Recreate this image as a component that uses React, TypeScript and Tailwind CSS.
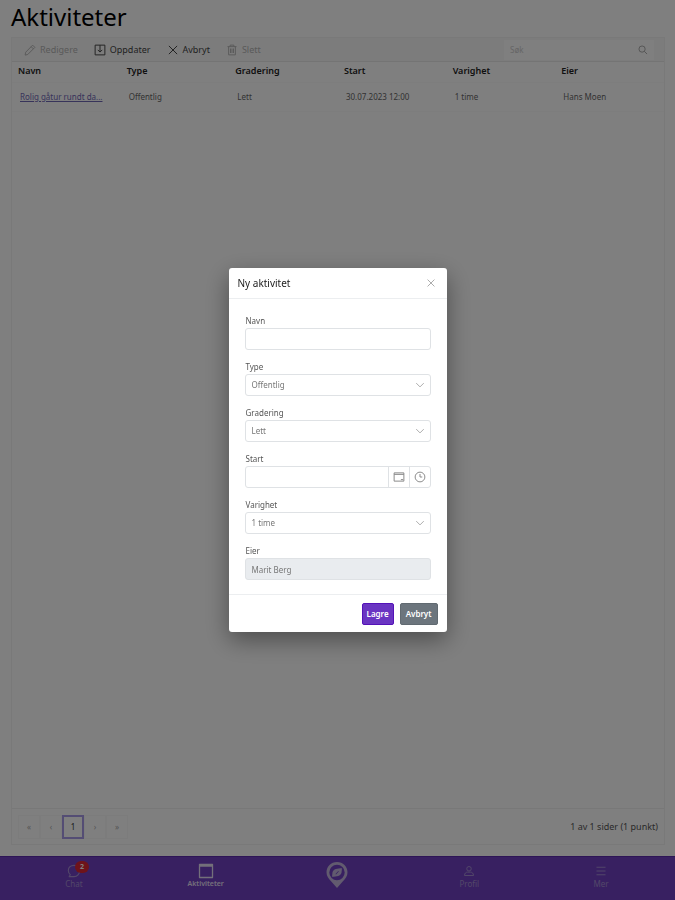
import { useState } from 'react'
import type { ReactNode } from 'react'
import { clsx } from 'clsx'

const columns = ['Navn', 'Type', 'Gradering', 'Start', 'Varighet', 'Eier']

const rows = [
  ['Rolig gåtur rundt da...', 'Offentlig', 'Lett', '30.07.2023 12:00', '1 time', 'Hans Moen'],
]

const iconPaths = {
  edit: 'M11.5 1.5 14.5 4.5 5 14 1.5 14.8 2.2 11ZM9.5 3.5l3 3',
  update: 'M1.5 1.5h13v13h-13ZM8 1.5v9M5 7.8l3 3 3-3',
  close: 'M2.5 2.5l11 11M13.5 2.5l-11 11',
  trash: 'M2 3.5h12M5.5 3.5v-2h5v2M3.5 3.5v11h9v-11M6 6v6M8 6v6M10 6v6',
  search: 'M6.5 1.5a5 5 0 1 0 0 10 5 5 0 0 0 0-10ZM10.2 10.2 14.5 14.5',
  chevron: 'M2 5l6 6 6-6',
  calendar: 'M1.5 2.5h13v11h-13ZM1.5 4.5h13M10.5 11.5h3',
  clock: 'M8 1.5a6.5 6.5 0 1 0 0 13 6.5 6.5 0 0 0 0-13ZM8 4v4h3',
  chat: 'M8 1.5C4.3 1.5 1.5 4 1.5 7.3c0 2 .9 3.6 2.3 4.8L2.5 14.5H8c3.7 0 6.5-3.2 6.5-7S11.7 1.5 8 1.5Z',
  window: 'M1.5 1.5h13v13h-13ZM1.5 3h13',
  user: 'M8 2a3 3 0 1 0 0 6 3 3 0 0 0 0-6ZM2 14c0-3 2-4.5 4-4.5h4c2 0 4 1.5 4 4.5Z',
  menu: 'M2 3h12M2 8h12M2 13h12',
}

interface IconProps {
  name: keyof typeof iconPaths
  className?: string
}

function Icon({ name, className = 'size-3' }: IconProps) {
  return (
    <svg
      className={clsx('shrink-0', className)}
      viewBox="0 0 16 16"
      fill="none"
      stroke="currentColor"
      strokeWidth="1.3"
      strokeLinejoin="round"
      aria-hidden="true"
    >
      <path d={iconPaths[name]} />
    </svg>
  )
}

function LogoPin() {
  return (
    <svg className="h-7 w-6" viewBox="0 0 24 28" aria-hidden="true">
      <path
        fillRule="evenodd"
        fill="currentColor"
        d="M12 1C6 1 1.5 5.5 1.5 11.3c0 3.8 2 6.6 5 9.4L12 27l5.5-6.3c3-2.8 5-5.6 5-9.4C22.5 5.5 18 1 12 1Zm0 2.8a7.7 7.7 0 1 1 0 15.4 7.7 7.7 0 0 1 0-15.4Z"
      />
      <path
        fillRule="evenodd"
        fill="currentColor"
        d="M17 7.2c-4.8 0-8.6.8-9.5 4L7 15.8c4.8 0 8.6-.8 9.5-4ZM13.3 10 10.5 12.9l.5.5 2.8-2.9Z"
      />
    </svg>
  )
}

interface ToolButtonProps {
  icon: keyof typeof iconPaths
  label: string
  disabled?: boolean
}

function ToolButton({ icon, label, disabled }: ToolButtonProps) {
  return (
    <button
      type="button"
      disabled={disabled}
      className="flex items-center gap-1 text-[#444] disabled:text-[#b4b4b4]"
    >
      <Icon name={icon} />
      {label}
    </button>
  )
}

function PagerButton({ label, children, active }: { label: string; children: ReactNode; active?: boolean }) {
  return (
    <button
      type="button"
      aria-label={label}
      className={clsx(
        'flex h-6 w-[22px] items-center justify-center',
        active ? 'border-2 border-[#a99ae8] text-[#333]' : 'border border-[#f8f8f8] text-[#aaa]'
      )}
    >
      {children}
    </button>
  )
}

function Field({ id, label, children }: { id: string; label: string; children: ReactNode }) {
  return (
    <div>
      <label htmlFor={id} className="block pl-px text-[8px] leading-[14px] text-[#555]">
        {label}
      </label>
      {children}
    </div>
  )
}

function SelectField({ id, label, options }: { id: string; label: string; options: string[] }) {
  return (
    <Field id={id} label={label}>
      <div className="grid items-center">
        <select
          id={id}
          className="col-start-1 row-start-1 h-[22px] w-full appearance-none rounded-[3px] border border-[#dfe2e5] bg-white px-1.5 text-[8px] text-[#777]"
        >
          {options.map((option) => (
            <option key={option}>{option}</option>
          ))}
        </select>
        <Icon
          name="chevron"
          className="pointer-events-none col-start-1 row-start-1 mr-1.5 size-2.5 justify-self-end text-[#999]"
        />
      </div>
    </Field>
  )
}

function ActivityDialog({ onClose }: { onClose: () => void }) {
  return (
    <div className="fixed inset-0 flex items-center justify-center bg-black/50">
      <div
        role="dialog"
        aria-modal="true"
        aria-labelledby="dialog-title"
        className="w-[218px] rounded-[3px] bg-white shadow-[0_8px_24px_rgba(0,0,0,0.4)]"
      >
        <div className="flex h-[31px] items-center justify-between border-b border-[#eceef0] px-[9px]">
          <h2 id="dialog-title" className="text-[10px] text-[#222]">Ny aktivitet</h2>
          <button type="button" aria-label="Lukk" onClick={onClose} className="p-0.5 text-[#999]">
            <Icon name="close" className="size-2.5" />
          </button>
        </div>

        <form className="flex flex-col gap-2.5 px-4 pt-[15px] pb-3.5">
          <Field id="navn" label="Navn">
            <input
              id="navn"
              type="text"
              className="block h-[22px] w-full rounded-[3px] border border-[#dfe2e5] px-1.5 text-[8px] text-[#777]"
            />
          </Field>
          <SelectField id="type" label="Type" options={['Offentlig', 'Privat']} />
          <SelectField id="gradering" label="Gradering" options={['Lett', 'Middels', 'Krevende']} />
          <Field id="start" label="Start">
            <div className="flex h-[22px] overflow-hidden rounded-[3px] border border-[#dfe2e5] text-[#888]">
              <input id="start" type="text" className="min-w-0 flex-1 px-1.5 text-[8px]" />
              <button type="button" aria-label="Velg dato" className="border-l border-[#dfe2e5] px-1">
                <Icon name="calendar" />
              </button>
              <button type="button" aria-label="Velg tid" className="border-l border-[#dfe2e5] px-1">
                <Icon name="clock" />
              </button>
            </div>
          </Field>
          <SelectField id="varighet" label="Varighet" options={['1 time', '2 timer', '3 timer']} />
          <Field id="eier" label="Eier">
            <input
              id="eier"
              type="text"
              readOnly
              defaultValue="Marit Berg"
              className="block h-[22px] w-full rounded-[3px] border border-[#dfe2e5] bg-[#e9ecef] px-1.5 text-[8px] text-[#777]"
            />
          </Field>
        </form>

        <div className="flex h-[38px] items-center justify-end gap-1.5 border-t border-[#eceef0] px-[9px] text-[8px] font-semibold text-white">
          <button type="button" className="h-[22px] rounded-[2px] border border-[#5412b8] bg-[#6a35c2] px-1">
            Lagre
          </button>
          <button
            type="button"
            onClick={onClose}
            className="h-[22px] rounded-[2px] border border-[#616a71] bg-[#6c757d] px-[5px]"
          >
            Avbryt
          </button>
        </div>
      </div>
    </div>
  )
}

function NavLink({ label, active, children }: { label: string; active?: boolean; children: ReactNode }) {
  return (
    <a
      href="#"
      className={clsx(
        'flex flex-1 flex-col items-center pt-1.5 leading-[10px]',
        active ? 'text-[7px] font-semibold text-[#e6def5]' : 'text-[8px] text-[#a68fd2]'
      )}
    >
      <span className="relative flex h-4 items-center">{children}</span>
      {label}
    </a>
  )
}

export default function App() {
  const [dialogOpen, setDialogOpen] = useState(true)

  return (
    <div className="flex min-h-screen flex-col bg-white font-['Noto_Sans','Open_Sans',sans-serif] text-[#222]">
      <main className="flex flex-1 flex-col pr-2.5 pb-[11px] pl-[11px]">
        <h1 className="h-[37px] text-2xl leading-[34px] text-black">Aktiviteter</h1>

        <section className="flex flex-1 flex-col border border-[#f3f3f3]">
          <div className="flex h-6 items-center gap-4 border-b border-[#e8e8e8] bg-[#f9f9f9] pr-2.5 pl-3 text-[9px]">
            <ToolButton icon="edit" label="Redigere" disabled />
            <ToolButton icon="update" label="Oppdater" />
            <ToolButton icon="close" label="Avbryt" />
            <ToolButton icon="trash" label="Slett" disabled />
            <div className="ml-auto flex h-5 w-[150px] items-center bg-white px-1.5 text-[8px] text-[#999]">
              <input
                type="text"
                aria-label="Søk"
                placeholder="Søk"
                className="min-w-0 flex-1 placeholder:text-[#ccc]"
              />
              <Icon name="search" className="size-2.5" />
            </div>
          </div>

          <table className="w-full table-fixed text-left">
            <thead>
              <tr className="h-5 border-b border-[#fafafa] text-[9px]">
                {columns.map((column) => (
                  <th key={column} scope="col" className="px-1.5 pb-0.5 font-semibold">{column}</th>
                ))}
              </tr>
            </thead>
            <tbody>
              {rows.map((row) => (
                <tr key={row[0]} className="h-[29px] border-b border-[#fafafa] text-[8px] text-[#666]">
                  {row.map((cell, i) => (
                    <td key={columns[i]} className="pl-2 whitespace-nowrap">
                      {i === 0 ? <a href="#" className="text-[#6f66b5] underline">{cell}</a> : cell}
                    </td>
                  ))}
                </tr>
              ))}
            </tbody>
          </table>

          <div className="mt-auto flex h-9 items-center justify-between border-t border-[#f0f0f0] px-1.5 text-[9px]">
            <div className="flex text-[8px]">
              <PagerButton label="Første side">«</PagerButton>
              <PagerButton label="Forrige side">‹</PagerButton>
              <PagerButton label="Side 1" active>1</PagerButton>
              <PagerButton label="Neste side">›</PagerButton>
              <PagerButton label="Siste side">»</PagerButton>
            </div>
            <span className="text-[#555]">1 av 1 sider (1 punkt)</span>
          </div>
        </section>
      </main>

      <nav className="flex h-11 border-t border-[#5a2bad] bg-[#7041c3] px-2">
        <NavLink label="Chat">
          <Icon name="chat" className="size-3.5" />
          <span className="absolute -top-0.5 left-2 flex h-3 w-3.5 items-center justify-center rounded-full bg-[#dc2635] text-[7px] font-bold text-white">
            2
          </span>
        </NavLink>
        <NavLink label="Aktiviteter" active>
          <Icon name="window" className="size-4" />
        </NavLink>
        <a href="#" aria-label="Hjem" className="flex flex-1 justify-center pt-1 text-[#c4b6df]">
          <LogoPin />
        </a>
        <NavLink label="Profil">
          <Icon name="user" />
        </NavLink>
        <NavLink label="Mer">
          <Icon name="menu" />
        </NavLink>
      </nav>

      {dialogOpen && <ActivityDialog onClose={() => setDialogOpen(false)} />}
    </div>
  )
}
